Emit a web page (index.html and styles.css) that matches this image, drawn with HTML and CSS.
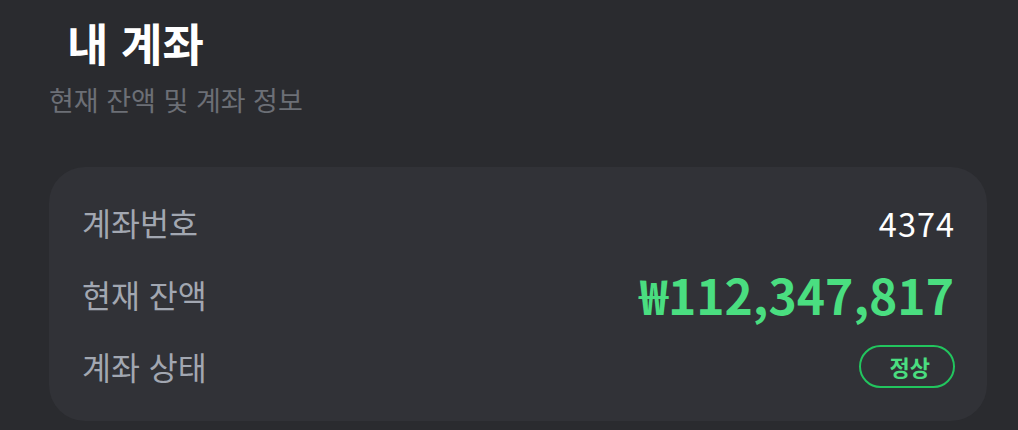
FILE: index.html
```html
<!DOCTYPE html>
<html lang="ko">
<head>
<meta charset="utf-8">
<link rel="stylesheet" href="styles.css">
</head>
<body>
<div class="page">
  <header class="head">
    <h1 class="title">내 계좌</h1>
    <p class="subtitle">현재 잔액 및 계좌 정보</p>
  </header>
  <section class="card">
    <div class="row">
      <span class="label">계좌번호</span>
      <span class="value">4374</span>
    </div>
    <div class="row">
      <span class="label">현재 잔액</span>
      <span class="amount">₩112,347,817</span>
    </div>
    <div class="row">
      <span class="label">계좌 상태</span>
      <span class="badge">정상</span>
    </div>
  </section>
</div>
</body>
</html>
```
FILE: styles.css
```css
html, body {
  margin: 0;
  padding: 0;
  background: #2a2b2f;
}
body {
  font-family: "Noto Sans CJK KR", "Noto Sans", sans-serif;
  width: 1018px;
  height: 430px;
  overflow: hidden;
}
.page {
  padding: 0 31px 0 49px;
}
.head {
  padding-top: 13px;
}
.title {
  margin: 0 0 0 18px;
  font-size: 45px;
  line-height: 60px;
  font-weight: 700;
  color: #ffffff;
}
.subtitle {
  margin: 9px 0 0 0;
  font-size: 27px;
  line-height: 36px;
  color: #6c6f76;
}
.card {
  margin-top: 49px;
  background: #313237;
  border-radius: 36px;
  padding: 19px 32px 19px 33px;
  display: flex;
  flex-direction: column;
}
.row {
  display: flex;
  justify-content: space-between;
  align-items: center;
  height: 72px;
}
.label {
  font-size: 31.5px;
  color: #a2a7b1;
}
.value {
  font-size: 32.5px;
  letter-spacing: 1px;
  color: #ffffff;
}
.amount {
  font-size: 48px;
  font-weight: 700;
  color: #4ade80;
  line-height: 1;
  font-variant-numeric: tabular-nums;
  padding-right: 1px;
}
.badge {
  font-size: 22px;
  font-weight: 700;
  color: #4ade80;
  border: 2px solid #22c55e;
  border-radius: 999px;
  padding: 4px 23px 4px 29px;
  line-height: 31px;
}
```
